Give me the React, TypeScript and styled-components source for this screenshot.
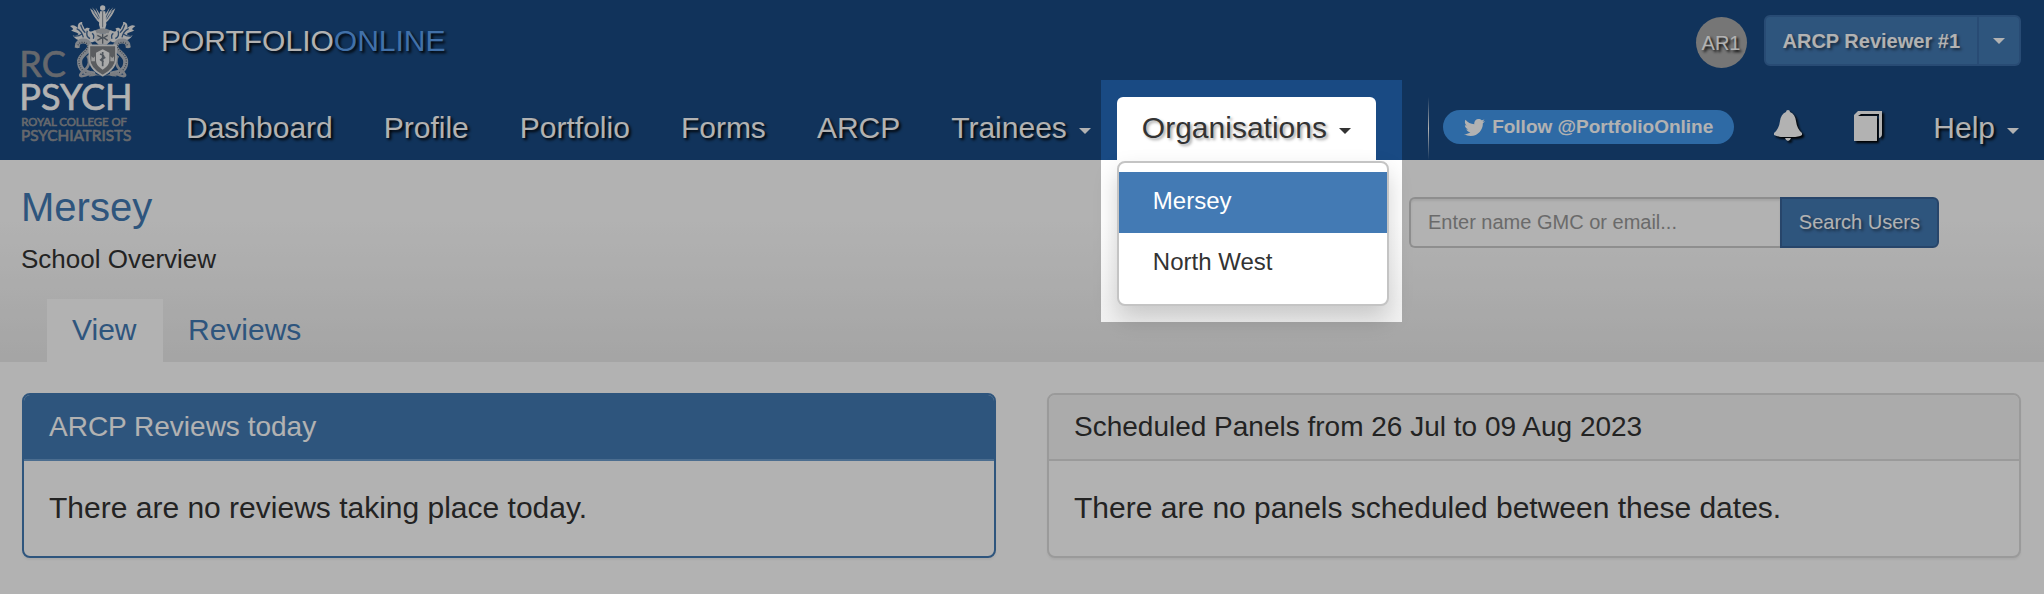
import React from "react";
import styled, { createGlobalStyle } from "styled-components";
import { FaTwitter } from "react-icons/fa";

const GlobalStyle = createGlobalStyle`
  *, *::before, *::after { box-sizing: border-box; }
  body {
    margin: 0;
    background: #fff;
    color: #333;
    font-family: "Liberation Sans", Arial, sans-serif;
    font-size: 30px;
    line-height: 42px;
  }
  button, input { font: inherit; }
  h1, h2, p, ul { margin: 0; padding: 0; font-weight: normal; }
  a { text-decoration: none; color: inherit; }
`;

const blue = "#437ab4";

const Page = styled.div`
  position: relative;
  min-height: 100vh;
  overflow: hidden;
`;

const Header = styled.header`
  display: flex;
  height: 160px;
  background: #194a83;
  color: #fff;
`;

const LogoLink = styled.a`
  flex: 0 0 161px;
  padding-left: 10px;
`;

const HeaderMain = styled.div`
  flex: 1;
  display: flex;
  flex-direction: column;
  justify-content: space-between;
  padding-top: 15px;
`;

const TopRow = styled.div`
  display: flex;
  align-items: center;
  height: 51px;
  padding-right: 23px;
`;

const Brand = styled.a`
  margin-right: auto;
  text-shadow: 2px 2px 3px #000;
`;

const BrandAccent = styled.span`
  color: #5fa3f2;
`;

const Avatar = styled.span`
  display: flex;
  align-items: center;
  justify-content: center;
  width: 51px;
  height: 51px;
  margin: 4px 17px 0 0;
  border-radius: 50%;
  background: #aaa;
  font-size: 20px;
  text-shadow: 2px 2px 3px #000;
`;

const UserGroup = styled.div`
  display: flex;
  height: 51px;
`;

const UserButton = styled.button<{ $edge: "left" | "right" }>`
  display: flex;
  align-items: center;
  justify-content: center;
  padding: ${(p) => (p.$edge === "left" ? "0 17px" : "0 14px")};
  border: 2px solid #3a6ca6;
  border-left-width: ${(p) => (p.$edge === "left" ? "2px" : "0")};
  border-radius: ${(p) => (p.$edge === "left" ? "6px 0 0 6px" : "0 6px 6px 0")};
  background: ${blue};
  color: #fff;
  font-size: 20px;
  font-weight: bold;
  line-height: 28px;
  text-shadow: 2px 2px 3px rgba(0, 0, 0, 0.5);
`;

const Caret = styled.span`
  width: 0;
  height: 0;
  border: 6px solid transparent;
  border-top-color: currentColor;
  border-bottom-width: 0;
`;

const Nav = styled.nav`
  display: flex;
  align-items: center;
  gap: 1px;
  height: 63px;
`;

const NavItem = styled.div`
  position: relative;
`;

const NavLink = styled.a`
  display: flex;
  align-items: center;
  gap: 12px;
  height: 63px;
  padding: 0 25px 2px;
  text-shadow: 2px 2px 3px #000;

  ${Caret} { margin-top: 7px; }
  svg {
    margin-bottom: 3px;
    filter: drop-shadow(2px 2px 1px #000);
  }
`;

const OpenNavButton = styled.button`
  display: flex;
  align-items: center;
  gap: 12px;
  height: 63px;
  padding: 0 25px 2px;
  border: 0;
  border-radius: 6px 6px 0 0;
  background: #fff;
  color: #333;
  text-shadow: 2px 2px 3px rgba(0, 0, 0, 0.35);

  ${Caret} { margin-top: 7px; }
`;

const Menu = styled.ul`
  position: absolute;
  z-index: 10;
  top: 64px;
  left: 0;
  width: 272px;
  padding: 9px 0 10px;
  border: 2px solid #c4c4c4;
  border-radius: 8px;
  background: #fff;
  box-shadow: 0 12px 24px rgba(0, 0, 0, 0.18);
  list-style: none;
`;

const MenuLink = styled.a<{ $active?: boolean }>`
  display: block;
  padding: 8px 34px 11px;
  background: ${(p) => (p.$active ? blue : "transparent")};
  color: ${(p) => (p.$active ? "#fff" : "#333")};
  font-size: 24px;
`;

const Spotlight = styled.div`
  position: absolute;
  z-index: 20;
  top: -17px;
  left: -16px;
  width: 301px;
  height: 242px;
  box-shadow: 0 0 0 4000px rgba(0, 0, 0, 0.3);
  pointer-events: none;
`;

const NavEnd = styled.div`
  display: flex;
  align-items: center;
  margin-left: auto;
`;

const Divider = styled.span`
  width: 1px;
  height: 63px;
  margin-right: 14px;
  background: linear-gradient(transparent, #fff, transparent);
`;

const FollowLink = styled.a`
  display: flex;
  align-items: center;
  gap: 7px;
  height: 34px;
  margin: 0 14px 3px 0;
  padding: 0 21px;
  border-radius: 17px;
  background: #4298ec;
  font-size: 19px;
  font-weight: bold;
`;

const PageHead = styled.section`
  height: 202px;
  display: flex;
  flex-direction: column;
  justify-content: space-between;
  background: linear-gradient(#fff 30%, #ececec);
`;

const TitleRow = styled.div`
  display: flex;
  justify-content: space-between;
  padding: 20px 105px 0 21px;
`;

const Title = styled.h1`
  margin-bottom: 4px;
  color: ${blue};
  font-size: 40px;
  line-height: 54px;
`;

const Subtitle = styled.p`
  font-size: 26px;
`;

const SearchForm = styled.form`
  display: flex;
  width: 530px;
  height: 51px;
  margin-top: 17px;
`;

const SearchInput = styled.input`
  flex: 1;
  min-width: 0;
  padding: 0 17px 2px;
  border: 2px solid #ccc;
  border-right: 0;
  border-radius: 6px 0 0 6px;
  background: #fff;
  box-shadow: inset 0 2px 2px rgba(0, 0, 0, 0.08);
  color: #333;
  font-size: 20px;

  &::placeholder { color: #999; opacity: 1; }
`;

const SearchButton = styled.button`
  padding: 0 17px 2px;
  border: 2px solid #386499;
  border-radius: 0 6px 6px 0;
  background: ${blue};
  color: #fff;
  font-size: 20px;
  text-shadow: 2px 2px 3px rgba(0, 0, 0, 0.5);
`;

const Tabs = styled.nav`
  display: flex;
  padding-left: 47px;
`;

const Tab = styled.a<{ $active?: boolean }>`
  min-width: 116px;
  padding: 10px 25px 11px;
  background: ${(p) => (p.$active ? "#fff" : "transparent")};
  color: ${blue};
`;

const Panels = styled.main`
  display: grid;
  grid-template-columns: 1fr 1fr;
  gap: 51px;
  padding: 31px 23px 31px 22px;
`;

const Panel = styled.section<{ $primary?: boolean }>`
  border: 2px solid ${(p) => (p.$primary ? blue : "#ddd")};
  border-radius: 8px;
  background: #fff;
  box-shadow: 0 2px 2px rgba(0, 0, 0, 0.05);
  overflow: hidden;

  h2 {
    padding: 11px 25px;
    border-bottom: 2px solid ${(p) => (p.$primary ? "#6c9ccd" : "#ddd")};
    background: ${(p) => (p.$primary ? blue : "#f5f5f5")};
    color: ${(p) => (p.$primary ? "#fff" : "#333")};
    font-size: 28px;
  }

  p { padding: 26px 25px 27px; }
`;

const LogoSvg = styled.svg`
  display: block;

  text {
    font-family: Lato, "Liberation Sans", sans-serif;
    stroke-width: 2px;
  }
`;

/* The left half of the crest; the right half is its mirror image. */
const CrestHalf = () => (
  <g>
    <path
      d="M277 72C262 68 248 48 240 25L255 37 246 22 262 38 257 23 270 43 275 34Z"
      fill="#e8e8e8"
    />
    <path d="M250 34l16 24M243 39l17 22M258 32l12 24M246 54l14 10" stroke="#1a4a83" strokeWidth="2" fill="none" />
    <path
      d="M180 78C190 72 198 78 204 84C202 74 206 66 217 66C214 74 222 78 224 88C228 82 235 82 240 86C232 90 240 98 250 92C262 88 267 96 270 104L258 112C262 122 250 130 238 126C228 124 220 118 214 122C204 122 194 116 188 106C196 110 202 106 206 102C200 96 188 96 183 90C190 90 194 88 180 78Z"
      fill="#eee"
    />
    <path d="M200 86q16 8 20 26M212 74q4 16 14 24M232 92q-6 16 8 24M192 108q14 2 24-6M246 100q8 4 4 16" stroke="#426895" strokeWidth="4" fill="none" />
    <path
      d="M202 137C202 120 232 117 239 135C244 153 210 161 209 183C207 206 224 220 249 221"
      stroke="#b8bec6"
      strokeWidth="15"
      fill="none"
      strokeLinecap="round"
    />
    <path
      d="M204 136C208 125 228 123 234 136C236 153 207 161 207 183C206 207 226 222 249 222"
      stroke="#5d6878"
      strokeWidth="4"
      strokeDasharray="3 4"
      fill="none"
    />
    <path d="M199 134l-6 8 17 2z" fill="#ccc" />
    <path d="M232 167C241 179 240 199 220 214C210 221 206 230 218 228C231 227 238 219 246 216" stroke="#b0b5bd" strokeWidth="8" fill="none" />
  </g>
);

const Logo = () => (
  <LogoSvg width="135" height="150" viewBox="0 0 405 450" role="img" aria-label="Royal College of Psychiatrists">
    <CrestHalf />
    <g transform="translate(556 0) scale(-1 1)">
      <CrestHalf />
    </g>
    <circle cx="278" cy="24" r="8" fill="#f4f4f4" />
    <path d="M270 34h16l3 40-4 14h-14l-4-14z" fill="#f4f4f4" />
    <path d="M278 34v48" stroke="#7d8794" strokeWidth="3" />
    <path d="M256 91q22-12 44 0l-4 9h-36z" fill="#b4b8be" />
    <path d="M258 100h40l4 23-12 11h-24l-12-11z" fill="#dedede" />
    <path d="M262 106l14 7-14 8M293 106l-12 7 12 8M278 101v30" stroke="#6c7580" strokeWidth="4" fill="none" />
    <path d="M238 136h80v38c0 29-20 43-40 53-20-10-40-24-40-53z" fill="#818488" stroke="#e6e6e6" strokeWidth="5" />
    <path d="M258 158l20-10 20 10v22c0 14-9 22-20 29-11-7-20-15-20-29z" fill="#f2f2f2" />
    <path d="M278 156v43M270 162q17 5 8 12t3 12M270 181l16-9" stroke="#737b86" strokeWidth="5" fill="none" />
    <path d="M244 169l6 5 5-5v15h-11zM301 169l6 5 5-5v15h-11z" fill="#ddd" />
    <path d="M248 218q30 15 60 0l12 12q-42-8-84 0z" fill="#aeb2b8" />
    <text x="28" y="232" fontSize="108" fill="#92969c" stroke="#92969c">RC</text>
    <text x="28" y="329" fontSize="108" fill="#fff" stroke="#fff">PSYCH</text>
    <text x="34" y="377" fontSize="34" fill="#92969c" stroke="#92969c">ROYAL COLLEGE OF</text>
    <text x="33" y="422" fontSize="46" fill="#92969c" stroke="#92969c">PSYCHIATRISTS</text>
  </LogoSvg>
);

const BellIcon = () => (
  <svg width="30" height="32" viewBox="0 0 30 32" fill="#fff" aria-hidden="true">
    <path d="M13 2q0-2 2-2t2 2q5 2 6 9 1 8 6 12v2q-3 2-10 2h-8q-7 0-10-2v-2q5-4 6-12 1-7 6-9zM12 28h6q-1 3-3 3t-3-3z" />
  </svg>
);

const BookIcon = () => (
  <svg width="30" height="32" viewBox="0 0 30 32" fill="#fff" aria-hidden="true">
    <path d="M1 5l4-4h24v23q0 3-3 4V4H8L5 6h19v25H1z" />
  </svg>
);

const links = ["Dashboard", "Profile", "Portfolio", "Forms", "ARCP"];

export default function App() {
  return (
    <Page>
      <GlobalStyle />
      <Header>
        <LogoLink href="#" aria-label="Home">
          <Logo />
        </LogoLink>
        <HeaderMain>
          <TopRow>
            <Brand href="#">
              PORTFOLIO<BrandAccent>ONLINE</BrandAccent>
            </Brand>
            <Avatar>AR1</Avatar>
            <UserGroup>
              <UserButton type="button" $edge="left">ARCP Reviewer #1</UserButton>
              <UserButton type="button" $edge="right" aria-label="Account menu">
                <Caret />
              </UserButton>
            </UserGroup>
          </TopRow>
          <Nav>
            {links.map((label) => (
              <NavLink href="#" key={label}>{label}</NavLink>
            ))}
            <NavLink href="#">Trainees<Caret /></NavLink>
            <NavItem>
              <OpenNavButton type="button" aria-expanded="true">
                Organisations<Caret />
              </OpenNavButton>
              <Menu>
                <li><MenuLink href="#" $active>Mersey</MenuLink></li>
                <li><MenuLink href="#">North West</MenuLink></li>
              </Menu>
              <Spotlight />
            </NavItem>
            <NavEnd>
              <Divider />
              <FollowLink href="#">
                <FaTwitter size={21} />Follow @PortfolioOnline
              </FollowLink>
              <NavLink href="#" aria-label="Notifications"><BellIcon /></NavLink>
              <NavLink href="#" aria-label="Guides"><BookIcon /></NavLink>
              <NavLink href="#">Help<Caret /></NavLink>
            </NavEnd>
          </Nav>
        </HeaderMain>
      </Header>
      <PageHead>
        <TitleRow>
          <div>
            <Title>Mersey</Title>
            <Subtitle>School Overview</Subtitle>
          </div>
          <SearchForm>
            <SearchInput type="text" aria-label="Search users" placeholder="Enter name GMC or email..." />
            <SearchButton type="button">Search Users</SearchButton>
          </SearchForm>
        </TitleRow>
        <Tabs>
          <Tab href="#" $active>View</Tab>
          <Tab href="#">Reviews</Tab>
        </Tabs>
      </PageHead>
      <Panels>
        <Panel $primary>
          <h2>ARCP Reviews today</h2>
          <p>There are no reviews taking place today.</p>
        </Panel>
        <Panel>
          <h2>Scheduled Panels from 26 Jul to 09 Aug 2023</h2>
          <p>There are no panels scheduled between these dates.</p>
        </Panel>
      </Panels>
    </Page>
  );
}
